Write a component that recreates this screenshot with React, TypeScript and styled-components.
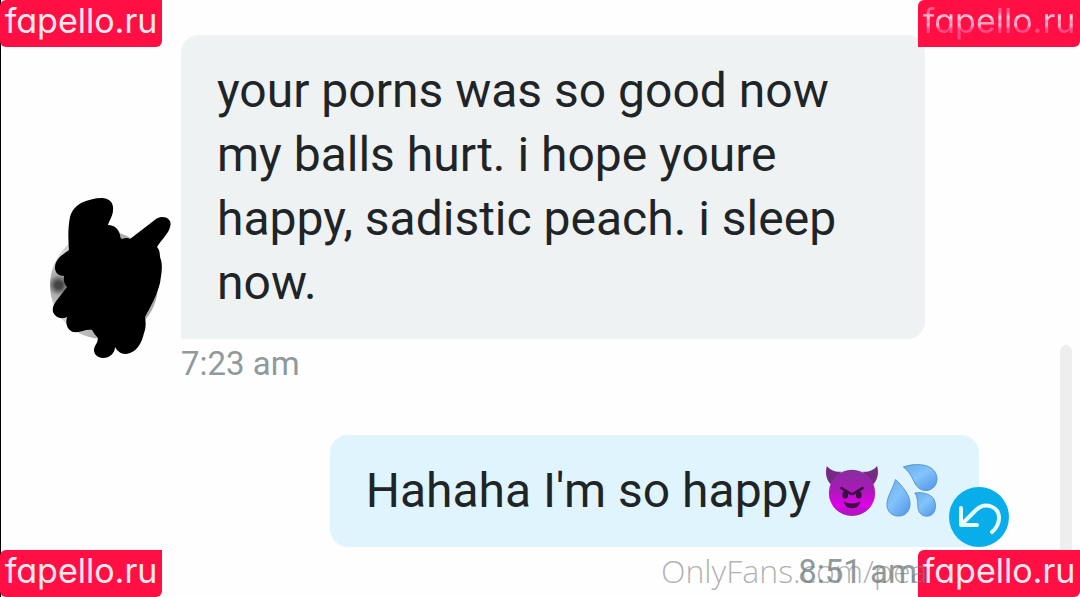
import React from 'react';
import styled, { createGlobalStyle, css } from 'styled-components';

const GlobalStyle = createGlobalStyle`
  *, *::before, *::after { box-sizing: border-box; }
  body {
    margin: 0;
    background: #fefefe;
    font-family: Roboto, 'Liberation Sans', sans-serif;
  }
`;

const Page = styled.main`
  position: relative;
  min-height: 100vh;
  padding: 35px 101px 0 49px;
  border-left: 1px solid #000;
`;

const Thread = styled.div`
  display: flex;
  flex-direction: column;
  gap: 46px;
`;

const IncomingRow = styled.article`
  display: grid;
  grid-template-columns: 112px minmax(0, 744px);
  column-gap: 19px;
`;

const OutgoingRow = styled.article`
  display: flex;
  flex-direction: column;
  align-items: flex-end;
`;

const Avatar = styled.div`
  position: relative;
  align-self: end;
  width: 108px;
  height: 108px;
  border-radius: 50%;
  background: radial-gradient(circle at 8% 50%, #444 0 3%, #aaa 9%, #ddd 24%, #aaa 60%);
`;

const Scribble = styled.svg`
  position: absolute;
  left: -2px;
  top: -35px;
`;

const Bubble = styled.div<{ $own?: boolean }>`
  position: relative;
  padding: ${(p) => (p.$own ? '24px 40px 24px 36px' : '24px 36px')};
  color: #1f2427;
  font-size: 48px;
  line-height: 64px;
  background: ${(p) => (p.$own ? '#e0f4fe' : '#eef2f3')};
  border-radius: ${(p) => (p.$own ? '18px 18px 0 18px' : '18px 18px 18px 0')};
`;

const Message = styled.p`
  display: flex;
  align-items: center;
  margin: 0;
`;

const Emoji = styled.svg`
  flex: none;
  width: 54px;
  height: 54px;
  margin-left: 6px;
  &:first-of-type { margin-left: 14px; }
`;

const Time = styled.time<{ $own?: boolean }>`
  color: #8f9a9b;
  font-size: 33px;
  line-height: 50px;
  ${(p) => (p.$own ? css`margin-right: 62px;` : css`grid-column: 2;`)}
`;

const ReplyButton = styled.button`
  position: absolute;
  right: -30px;
  bottom: 0;
  width: 60px;
  height: 60px;
  padding: 0;
  border: 0;
  border-radius: 50%;
  background: #08aeea;
  color: #e8fbff;
  svg { display: block; }
`;

const ScrollThumb = styled.div`
  position: absolute;
  top: 345px;
  right: 8px;
  bottom: 0;
  width: 12px;
  border-radius: 6px 6px 0 0;
  background: #eeeeee;
`;

const Badge = styled.a<{ $v: 'top' | 'bottom'; $h: 'left' | 'right'; $faded?: boolean }>`
  position: absolute;
  ${(p) => p.$v}: 0;
  ${(p) => p.$h}: ${(p) => (p.$h === 'left' ? '-1px' : '0')};
  width: 162px;
  height: 47px;
  border-radius: ${(p) => (p.$h === 'left' ? '6px 0 6px 6px' : '6px 0 6px 0')};
  background: #ff0f44;
  color: #ffe9ef;
  font-family: Inter, 'Liberation Sans', sans-serif;
  font-feature-settings: 'cv11';
  font-size: 34px;
  line-height: 42px;
  text-align: center;
  text-decoration: none;
  white-space: nowrap;
  span {
    ${(p) =>
      p.$faded &&
      css`
        color: transparent;
        background: linear-gradient(#ff5a8c 12px, #ffd5e2 17px, #ff8fb2 22px, #ffc0d2 25px, #ff4a84 29px);
        background-clip: text;
        -webkit-background-clip: text;
      `}
  }
`;

const Watermark = styled.div`
  position: absolute;
  left: 660px;
  bottom: 4px;
  color: rgba(125, 125, 125, 0.6);
  font-family: 'Open Sans', 'Noto Sans', sans-serif;
  font-weight: 300;
  font-size: 32px;
  line-height: 44px;
  white-space: nowrap;
`;

function DevilEmoji() {
  return (
    <Emoji viewBox="0 0 56 56" role="img" aria-label="smiling face with horns">
      <defs>
        <linearGradient id="devil" x1="0" y1="0" x2="0" y2="1">
          <stop offset="0" stopColor="#84309a" />
          <stop offset="0.45" stopColor="#ad18bb" />
          <stop offset="0.75" stopColor="#e000e8" />
          <stop offset="1" stopColor="#a51bb5" />
        </linearGradient>
      </defs>
      <path d="M2 2C7 8 12 8 17 8L6 21C1 16 0 8 2 2ZM54 2C49 8 44 8 39 8L50 21C55 16 56 8 54 2Z" fill="#752b82" />
      <circle cx="28" cy="30" r="24" fill="url(#devil)" />
      <path d="M17 25L27 31M39 25L29 31" stroke="#391141" strokeWidth="2.5" strokeLinecap="round" />
      <ellipse cx="21" cy="32" rx="3" ry="4" fill="#391141" />
      <ellipse cx="35" cy="32" rx="3" ry="4" fill="#391141" />
      <path d="M19 39Q28 43 37 39Q35 46 28 46Q21 46 19 39Z" fill="#391141" />
    </Emoji>
  );
}

function DropletsEmoji() {
  return (
    <Emoji viewBox="0 0 56 56" role="img" aria-label="sweat droplets">
      <defs>
        <linearGradient id="drop" x1="0" y1="0" x2="0.8" y2="1">
          <stop offset="0" stopColor="#64aee8" />
          <stop offset="0.5" stopColor="#84c3fb" />
          <stop offset="1" stopColor="#559be9" />
        </linearGradient>
      </defs>
      <g fill="url(#drop)" stroke="#5695cf" strokeWidth="1">
        <path d="M19 3C31-1 44 0 50 6C56 12 55 22 48 26C41 30 33 26 30 18C27 11 24 7 19 3Z" />
        <path d="M11 16C18 23 26 32 26 41C26 49 21 54 14 54C7 54 2 49 2 42C2 34 8 26 11 16Z" />
        <path d="M31 30C39 29 48 31 51 37C54 44 52 53 45 54C38 55 34 50 34 43C34 37 33 33 31 30Z" />
      </g>
    </Emoji>
  );
}

export default function App() {
  return (
    <>
      <GlobalStyle />
      <Page>
        <Thread>
          <IncomingRow>
            <Avatar>
              <Scribble width="124" height="164" viewBox="0 0 124 164" aria-hidden="true">
                <path d="M54 2C61 2 66 7 65 14C65 20 61 25 60 29C66 29 71 33 72 39Q72 42 74 43Q79 41 82 43L108 23C116 18 125 23 122 31C121 37 114 43 109 51C113 55 111 60 113 64C115 71 113 80 112 87C109 99 103 110 97 121C98 127 98 132 96 137C94 146 90 154 82 157C76 159 71 158 67 151C67 157 62 162 55 162C48 162 44 156 47 150Q50 146 50 142Q46 138 44 134C37 133 33 137 25 136C20 134 17 129 19 121C13 124 7 121 5 116C4 111 6 108 9 104L19 91Q15 87 16 80C11 80 7 77 7 72C7 63 14 59 21 54C20 43 20 31 22 21C24 14 28 10 33 7C39 4 47 2 54 2Z" />
              </Scribble>
            </Avatar>
            <Bubble>
              <Message>your porns was so good now my balls hurt. i hope youre happy, sadistic peach. i sleep now.</Message>
            </Bubble>
            <Time>7:23 am</Time>
          </IncomingRow>
          <OutgoingRow>
            <Bubble $own>
              <Message>
                Hahaha I'm so happy
                <DevilEmoji />
                <DropletsEmoji />
              </Message>
              <ReplyButton type="button" aria-label="Reply">
                <svg width="60" height="60" viewBox="0 0 60 60" fill="none" stroke="currentColor" strokeWidth="4" strokeLinecap="round" strokeLinejoin="round">
                  <path d="M12 21V38H28M13 37L27 23C37 14 50 20 50 31Q50 39 43 45" />
                </svg>
              </ReplyButton>
            </Bubble>
            <Time $own>8:51 am</Time>
          </OutgoingRow>
        </Thread>
        <ScrollThumb />
        <Badge href="#" $v="top" $h="left"><span>fapello.ru</span></Badge>
        <Badge href="#" $v="top" $h="right" $faded><span>fapello.ru</span></Badge>
        <Badge href="#" $v="bottom" $h="left"><span>fapello.ru</span></Badge>
        <Badge href="#" $v="bottom" $h="right"><span>fapello.ru</span></Badge>
        <Watermark>OnlyFans.com/pea</Watermark>
      </Page>
    </>
  );
}
